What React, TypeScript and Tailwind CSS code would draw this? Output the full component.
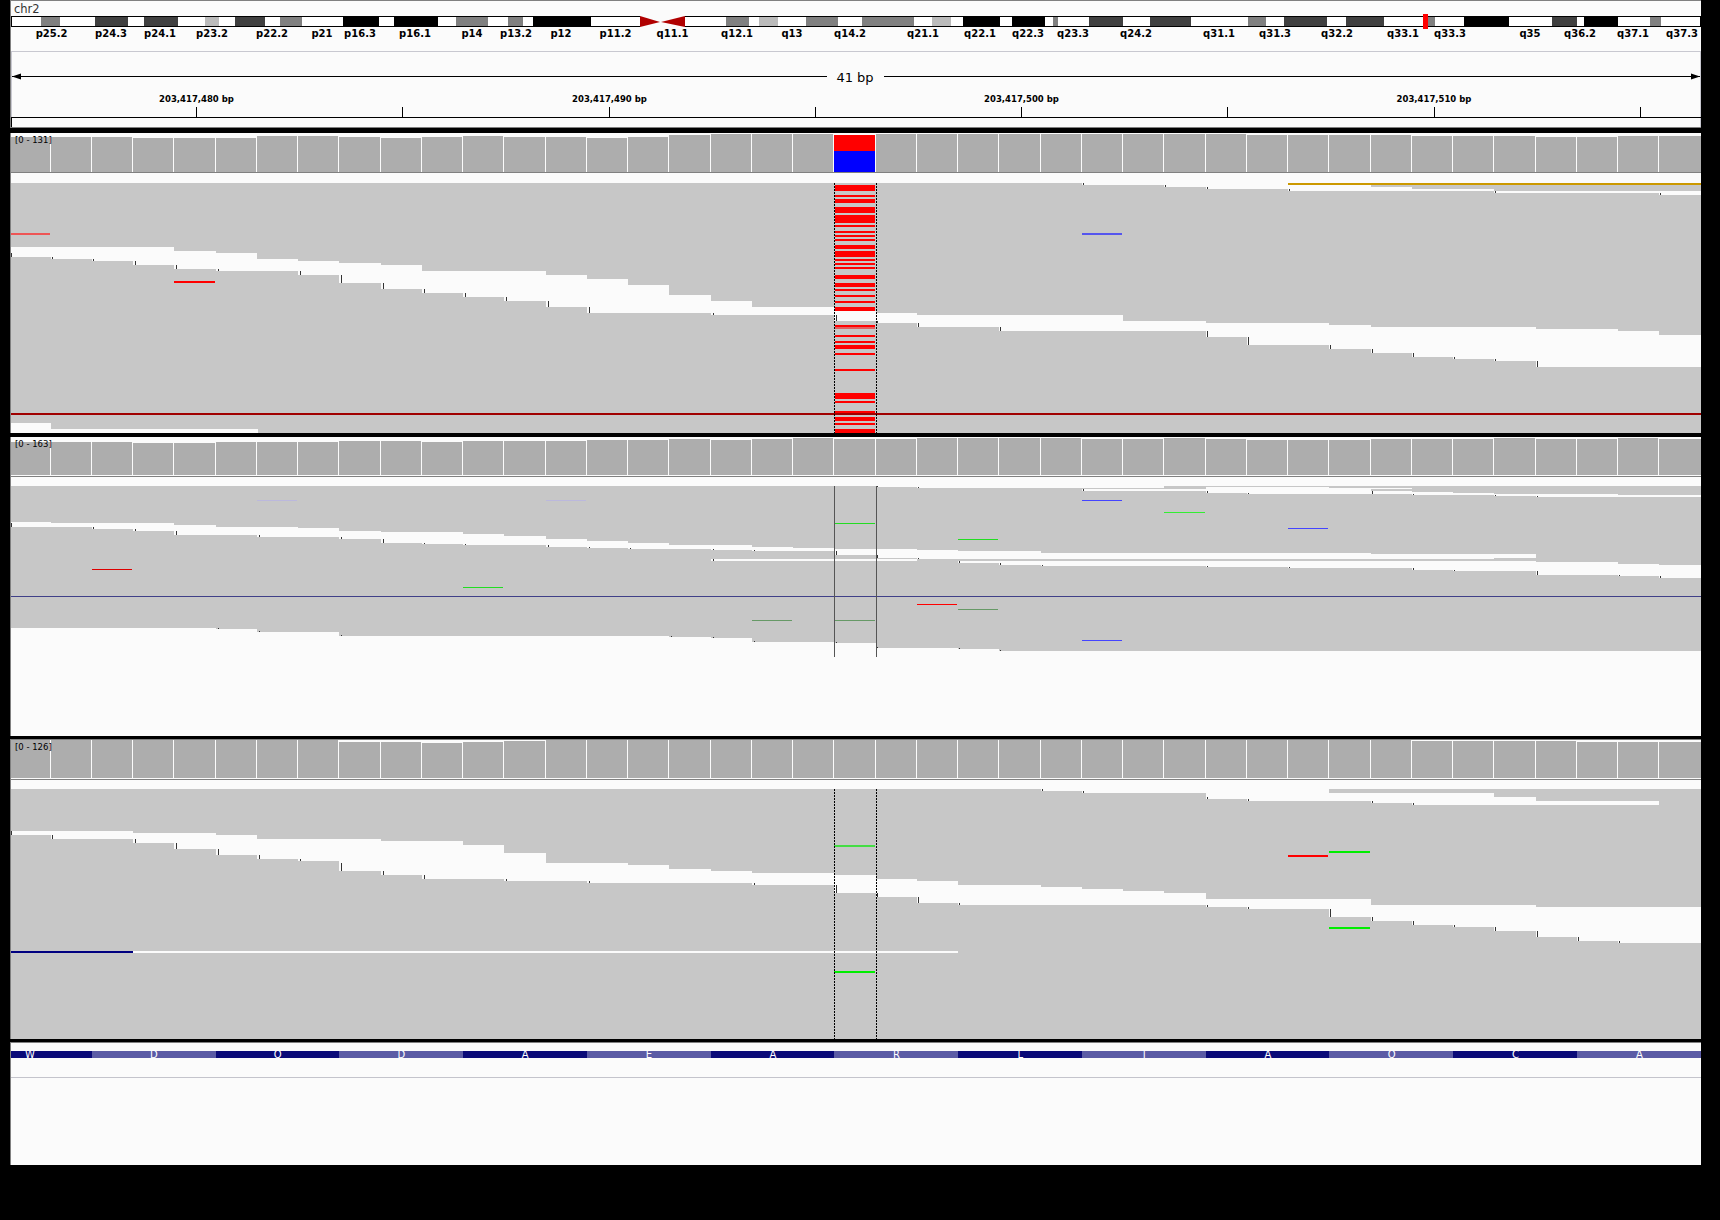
import type { ReactNode } from "react";

type Band = [number, number, number];

const sep = (i: number) => Math.round(8.25 + 41.25 * i);
const colX = (i: number) => (i === 0 ? 11 : sep(i) + 1);
const colEnd = (i: number) => (i === 40 ? 1701 : sep(i + 1));
const tickX = (i: number) => (i === 0 ? 11 : i >= 3 && i <= 20 ? colX(i) + 2 : colX(i) + 1);

const GAP = "#fbfbfb";
const READ = "#c7c7c7";
const BAR = "#adadad";

// zoom rows are 3x the page, so a z value is a third of a pixel
const toY = (base: number, z: number) => base + z / 3;
const seq = (start: number, rows: number[][]): Band[] =>
  rows.map((r, i) => [start + i, r[0], r[1]]);

function Rect({ x, y, w, h, c }: { x: number; y: number; w: number; h: number; c: string }) {
  return <rect x={x} y={y} width={w} height={h} fill={c} />;
}

function Stair({ bands, base, cap = 24 }: { bands: Band[]; base: number; cap?: number }) {
  let prev = -1;
  return (
    <>
      {bands.map(([col, z1, z2]) => {
        const from = prev < 0 ? Math.max(z1, z2 - 12) : Math.max(prev, z2 - cap, z1);
        const hasTick = z2 > prev;
        prev = z2;
        return (
          <g key={`${col}-${z1}`}>
            <Rect x={colX(col)} y={toY(base, z1)} w={colEnd(col) - colX(col) + 1} h={(z2 - z1) / 3} c={GAP} />
            {hasTick && <Rect x={tickX(col)} y={toY(base, from)} w={1} h={(z2 - from) / 3} c="#333333" />}
          </g>
        );
      })}
    </>
  );
}

function Mark({ col, y, c, h = 1 }: { col: number; y: number; c: string; h?: number }) {
  return <Rect x={colX(col)} y={y} w={colEnd(col) - colX(col)} h={h} c={c} />;
}

function Track({
  top,
  height,
  label,
  labelTop,
  barTop,
  barBottom,
  lineY,
  readTop,
  readBottom,
  offsets,
  children,
}: {
  top: number;
  height: number;
  label: string;
  labelTop: string;
  barTop: number;
  barBottom: number;
  lineY: number;
  readTop: number;
  readBottom: number;
  offsets: number[];
  children: ReactNode;
}) {
  return (
    <div className="relative w-[1691px] border-l border-[#808080] bg-[#fbfbfb]" style={{ height }}>
      <svg
        className="block h-full w-[1690px]"
        viewBox={`11 ${top} 1690 ${height}`}
        shapeRendering="crispEdges"
      >
        {offsets.map((o, i) => (
          <Rect
            key={i}
            x={colX(i)}
            y={barTop + o}
            w={colEnd(i) - colX(i)}
            h={barBottom - barTop - o}
            c={BAR}
          />
        ))}
        <Rect x={11} y={lineY} w={1690} h={1} c="#808080" />
        <Rect x={11} y={readTop} w={1690} h={readBottom - readTop} c={READ} />
        {children}
      </svg>
      <span className={`absolute left-[4px] text-[8.5px] leading-none text-black ${labelTop}`}>{label}</span>
    </div>
  );
}

const cyto: [number, number, string][] = [
  [41, 60, "#808080"], [95, 128, "#404040"], [144, 178, "#404040"], [205, 219, "#bbbbbb"],
  [235, 265, "#404040"], [280, 302, "#808080"], [343, 379, "#000000"], [394, 438, "#000000"],
  [456, 488, "#808080"], [508, 523, "#808080"], [533, 591, "#000000"], [726, 749, "#808080"],
  [759, 778, "#bbbbbb"], [806, 838, "#808080"], [862, 914, "#808080"], [932, 951, "#bbbbbb"],
  [963, 1000, "#000000"], [1012, 1045, "#000000"], [1053, 1058, "#808080"], [1089, 1123, "#404040"],
  [1150, 1191, "#404040"], [1248, 1266, "#808080"], [1284, 1327, "#404040"], [1346, 1384, "#404040"],
  [1428, 1435, "#808080"], [1464, 1509, "#000000"], [1552, 1577, "#404040"], [1584, 1618, "#000000"],
  [1650, 1661, "#808080"],
];

const cytoLabels: [string, number][] = [
  ["p25.2", 51.6], ["p24.3", 111], ["p24.1", 160], ["p23.2", 212], ["p22.2", 272], ["p21", 322],
  ["p16.3", 360], ["p16.1", 415], ["p14", 472], ["p13.2", 516], ["p12", 561], ["p11.2", 615.5],
  ["q11.1", 672.5], ["q12.1", 737], ["q13", 792], ["q14.2", 850], ["q21.1", 923], ["q22.1", 980],
  ["q22.3", 1028], ["q23.3", 1073], ["q24.2", 1136], ["q31.1", 1219], ["q31.3", 1275], ["q32.2", 1337],
  ["q33.1", 1403], ["q33.3", 1450], ["q35", 1530], ["q36.2", 1580], ["q37.1", 1633], ["q37.3", 1682],
];

const rulerTicks = [196, 402, 609, 815, 1021, 1227, 1434, 1640];
const rulerLabels: [string, number][] = [
  ["203,417,480 bp", 196.5],
  ["203,417,490 bp", 609.5],
  ["203,417,500 bp", 1021.5],
  ["203,417,510 bp", 1434],
];

function Header() {
  return (
    <div className="h-[128px] w-[1691px] border-l border-[#808080] bg-[#fbfbfb]">
      <svg className="block h-full w-[1690px]" viewBox="11 0 1690 128">
        <g shapeRendering="crispEdges">
          <Rect x={11} y={0} w={1690} h={1} c="#808080" />
          <Rect x={11} y={16} w={1690} h={11} c="#ffffff" />
          {cyto.map(([a, b, c]) => (
            <Rect key={a} x={a} y={16} w={b - a} h={11} c={c} />
          ))}
          <Rect x={640} y={16} w={45} h={11} c={GAP} />
          <Rect x={11} y={16} w={629} h={1} c="#000000" />
          <Rect x={11} y={26} w={629} h={1} c="#000000" />
          <Rect x={685} y={16} w={1016} h={1} c="#000000" />
          <Rect x={685} y={26} w={1016} h={1} c="#000000" />
          <Rect x={11} y={16} w={1} h={11} c="#000000" />
          <Rect x={1700} y={16} w={1} h={11} c="#000000" />
          <Rect x={1423} y={14} w={5} h={15} c="#ff0000" />
          <Rect x={11} y={51} w={1690} h={1} c="#c8c8d0" />
          <Rect x={11} y={51} w={1} h={66} c="#c8c8d0" />
          <Rect x={1700} y={51} w={1} h={76} c="#c8c8d0" />
          <Rect x={12} y={76} w={815} h={1} c="#000000" />
          <Rect x={884} y={76} w={816} h={1} c="#000000" />
          {rulerTicks.map((x) => (
            <Rect key={x} x={x} y={107} w={1} h={10} c="#000000" />
          ))}
          <Rect x={11} y={117} w={1690} h={1} c="#000000" />
          <Rect x={11} y={117} w={1} h={10} c="#000000" />
          <Rect x={11} y={127} w={1690} h={1} c="#808080" />
        </g>
        <polygon points="640,16 640,27 660,22" fill="#b00000" />
        <polygon points="685,16 685,27 661,22" fill="#b00000" />
        <polygon points="12,76.5 21,73.5 21,79.5" fill="#000000" />
        <polygon points="1700,76.5 1691,73.5 1691,79.5" fill="#000000" />
        <text x={14} y={13} fontSize={11.5} fill="#333333">chr2</text>
        {cytoLabels.map(([t, x]) => (
          <text key={t} x={x} y={37} fontSize={10} fontWeight={700} textAnchor="middle" fill="#000000">
            {t}
          </text>
        ))}
        <text x={855} y={82} fontSize={13} textAnchor="middle" fill="#000000">41 bp</text>
        {rulerLabels.map(([t, x]) => (
          <text key={t} x={x} y={102} fontSize={8.5} fontWeight={700} textAnchor="middle" fill="#000000">
            {t}
          </text>
        ))}
      </svg>
    </div>
  );
}

const rows1: [number, number, string?][] = [
  [45, 63], [75, 81], [87, 99], [111, 129], [135, 159], [165, 171], [183, 189], [195, 201], [207, 213],
  [225, 237], [243, 261], [267, 273], [279, 285], [291, 297], [315, 327], [339, 351], [357, 363],
  [375, 381], [393, 399], [411, 423], [465, 471], [471, 477, "#e06060"], [495, 501], [513, 519],
  [525, 537], [549, 555], [597, 603], [669, 687], [693, 699], [723, 735], [741, 753], [759, 765], [777, 789],
];

function Dotted({ top, bottom }: { top: number; bottom: number }) {
  return (
    <>
      <line x1={834.5} x2={834.5} y1={top} y2={bottom} stroke="#000000" strokeDasharray="2 1" />
      <line x1={876.5} x2={876.5} y1={top} y2={bottom} stroke="#000000" strokeDasharray="2 1" />
    </>
  );
}

function Reads1() {
  const base = 170;
  const mid = seq(0, [
    [231, 261], [231, 267], [231, 273], [231, 285], [243, 297], [249, 303], [267, 303], [273, 315],
    [279, 339], [285, 357], [303, 369], [303, 381], [303, 393], [315, 411], [327, 429], [345, 429],
    [375, 429], [393, 435], [411, 435], [411, 435], [423, 453], [429, 459], [435, 471], [435, 471],
    [435, 483], [435, 483], [435, 483], [453, 483], [453, 483], [459, 501], [459, 525], [459, 525],
    [465, 537], [471, 549], [471, 561], [471, 567], [471, 573], [477, 591], [477, 591], [483, 591], [495, 591],
  ]);
  const top: Band[] = [
    [26, 39, 45], [27, 39, 45], [28, 39, 51], [29, 39, 57], [30, 39, 57], [31, 39, 63], [32, 39, 63],
    [33, 51, 63], [34, 57, 63], [35, 57, 63], [36, 63, 69], [37, 63, 69], [38, 63, 69], [39, 63, 69], [40, 63, 75],
  ];
  return (
    <>
      <Stair bands={mid} base={base} />
      <Stair bands={top} base={base} cap={6} />
      <Rect x={1288} y={183} w={413} h={2} c="#cc9900" />
      <Rect x={11} y={423} w={40} h={10} c={GAP} />
      <Rect x={51} y={429} w={207} h={4} c={GAP} />
      <Mark col={0} y={233} c="#ee5555" h={2} />
      <Mark col={4} y={281} c="#ff0000" h={2} />
      <Mark col={26} y={233} c="#5555ee" h={2} />
      {rows1.map(([a, b, c]) => (
        <Rect key={a} x={835} y={toY(base, a)} w={40} h={(b - a) / 3} c={c ?? "#ff0000"} />
      ))}
      <Rect x={11} y={413} w={1690} h={2} c="#a00000" />
      <Dotted top={183} bottom={433} />
    </>
  );
}

function Reads2() {
  const base = 430;
  const mid = seq(0, [
    [276, 291], [279, 291], [279, 297], [279, 303], [285, 315], [291, 315], [291, 321], [294, 321],
    [303, 327], [306, 339], [306, 342], [312, 345], [318, 345], [327, 351], [333, 354], [339, 357],
    [345, 357], [345, 360], [351, 363], [354, 363], [357, 375], [357, 384], [360, 387], [363, 387],
    [363, 387], [369, 387], [369, 387], [369, 387], [369, 387], [369, 387], [369, 387], [369, 387],
    [369, 387], [372, 387], [372, 387], [372, 387], [372, 384],
  ]);
  const lower = [
    ...seq(17, [[387, 393], [387, 393], [387, 393], [387, 393], [387, 393]]),
    ...seq(23, [
      [393, 399], [393, 405], [393, 408], [393, 408], [393, 408], [393, 408], [393, 411], [393, 411],
      [393, 414], [393, 414], [393, 414], [393, 420], [393, 423], [393, 423], [396, 435], [396, 435],
      [402, 438], [405, 444],
    ]),
  ];
  const top = seq(21, [[168, 171], [168, 174], [168, 174], [168, 174], [168, 174], [168, 174], [168, 174]]);
  const upper: Band[] = [
    [26, 177, 183], [27, 177, 183], [28, 177, 183], [29, 171, 189], [30, 171, 192], [31, 171, 192], [32, 174, 192],
  ];
  const upper2: Band[] = [
    [33, 183, 192], [34, 186, 195], [35, 189, 195], [36, 192, 198], [37, 192, 201], [38, 192, 201], [39, 195, 201], [40, 195, 201],
  ];
  const bottoms = [
    594, 594, 594, 594, 594, 597, 606, 606, 618, 618, 618, 618, 618, 618, 618, 618, 621, 624, 636, 636, 639,
    654, 654, 657, 663, 663, 663, 663, 663, 663, 663, 663, 663, 663, 663, 663, 663, 663, 663, 663, 663,
  ];
  return (
    <>
      <Stair bands={mid} base={base} />
      <Stair bands={lower} base={base} />
      <Stair bands={top} base={base} cap={3} />
      <Stair bands={upper} base={base} cap={6} />
      <Stair bands={upper2} base={base} cap={6} />
      <Rect x={colX(28)} y={486} w={colX(29) - colX(28)} h={1} c={READ} />
      <Rect x={colX(33)} y={488} w={colX(34) - colX(33)} h={1} c={GAP} />
      {bottoms.map((z, i) => (
        <g key={i}>
          <Rect x={colX(i)} y={toY(base, z)} w={colEnd(i) - colX(i) + 1} h={736 - toY(base, z)} c={GAP} />
          {i > 0 && z > bottoms[i - 1] && <Rect x={tickX(i)} y={toY(base, z) - 1} w={1} h={1} c="#333333" />}
        </g>
      ))}
      <Mark col={6} y={500} c="#bbb8dd" />
      <Mark col={13} y={500} c="#bbb8dd" />
      <Mark col={26} y={500} c="#4444ff" />
      <Mark col={28} y={512} c="#33ee33" />
      <Mark col={20} y={523} c="#22dd22" />
      <Mark col={31} y={528} c="#4444ff" />
      <Mark col={23} y={539} c="#22dd22" />
      <Mark col={2} y={569} c="#dd0000" />
      <Mark col={11} y={587} c="#22dd22" />
      <Rect x={11} y={596} w={1690} h={1} c="#404088" />
      <Mark col={22} y={604} c="#ff0000" />
      <Mark col={23} y={609} c="#669966" />
      <Mark col={18} y={620} c="#669966" />
      <Mark col={20} y={620} c="#669966" />
      <Mark col={26} y={640} c="#4444ff" />
      <Rect x={834} y={486} w={1} h={171} c="#555555" />
      <Rect x={876} y={486} w={1} h={171} c="#555555" />
    </>
  );
}

function Reads3() {
  const base = 730;
  const mid = seq(0, [
    [303, 315], [303, 327], [303, 327], [309, 339], [309, 357], [315, 375], [327, 387], [327, 393],
    [327, 423], [333, 435], [333, 447], [345, 447], [369, 453], [399, 453], [399, 459], [405, 459],
    [417, 459], [423, 459], [429, 465], [429, 465], [435, 489], [447, 501], [453, 519], [465, 525],
    [465, 525], [471, 525], [477, 525], [483, 525], [489, 525], [507, 531], [507, 537], [507, 537],
    [507, 561], [525, 573], [525, 585], [525, 591], [525, 603], [531, 621], [531, 633], [531, 639], [531, 639],
  ]);
  const top = seq(25, [
    [177, 183], [177, 189], [177, 189], [177, 189], [177, 207], [177, 213], [177, 213], [189, 213],
    [189, 219], [189, 225], [189, 225], [201, 225], [213, 225], [213, 225], [213, 225],
  ]);
  return (
    <>
      <Rect x={11} y={739} w={1690} h={1} c="#808080" />
      <Stair bands={mid} base={base} />
      <Stair bands={top} base={base} cap={6} />
      <Rect x={11} y={951} w={colX(3) - 11} h={2} c="#000080" />
      <Rect x={colX(3)} y={951} w={colX(23) - colX(3)} h={2} c={GAP} />
      <Mark col={20} y={845} c="#44dd44" h={2} />
      <Mark col={20} y={971} c="#00ee00" h={2} />
      <Mark col={32} y={851} c="#00ee00" h={2} />
      <Mark col={31} y={855} c="#ff0000" h={2} />
      <Mark col={32} y={927} c="#00ee00" h={2} />
      <Dotted top={789} bottom={1039} />
    </>
  );
}

const aminos = ["W", "D", "Q", "D", "A", "E", "A", "R", "L", "I", "A", "Q", "C", "A"];

function Protein() {
  return (
    <div className="h-[123px] w-[1691px] border-l border-t border-[#808080] bg-[#fbfbfb]">
      <svg className="block h-[122px] w-[1690px]" viewBox="11 1043 1690 122">
        <g shapeRendering="crispEdges">
          {aminos.map((_, i) => {
            const x = i === 0 ? 11 : sep(3 * i - 1) + 1;
            const end = i === 13 ? 1701 : sep(3 * i + 2) + 1;
            return <Rect key={i} x={x} y={1051} w={end - x} h={7} c={i % 2 ? "#5b5ba5" : "#0a0a78"} />;
          })}
          <Rect x={11} y={1077} w={1690} h={1} c="#c4c4cc" />
        </g>
        {aminos.map((a, i) => (
          <text key={i} x={30 + 123.8 * i} y={1058} fontSize={10} textAnchor="middle" fill="#ffffff">
            {a}
          </text>
        ))}
      </svg>
    </div>
  );
}

export default function App() {
  return (
    <div className="flex h-[1220px] w-[1720px] flex-col overflow-hidden bg-black pl-[10px] font-['DejaVu_Sans',sans-serif]">
      <Header />
      <div className="mt-[5px]">
        <Track
          top={133}
          height={300}
          label="[0 - 131]"
          labelTop="top-[3px]"
          barTop={134}
          barBottom={172}
          lineY={172}
          readTop={183}
          readBottom={433}
          offsets={[
            3, 3, 3, 4, 4, 4, 2, 2, 3, 4, 3, 2, 3, 3, 4, 3, 1, 0, 0, 0, 1, 0, 0, 0, 0, 0, 0, 0, 0, 0, 1, 1, 1, 1, 2, 2, 2,
            3, 3, 2, 2,
          ]}
        >
          <Rect x={834} y={135} w={41} h={16} c="#ff0000" />
          <Rect x={834} y={151} w={41} h={21} c="#0000ff" />
          <Reads1 />
        </Track>
      </div>
      <div className="mt-[4px]">
        <Track
          top={437}
          height={299}
          label="[0 - 163]"
          labelTop="top-[3px]"
          barTop={438}
          barBottom={475}
          lineY={476}
          readTop={486}
          readBottom={664}
          offsets={[
            4, 4, 4, 5, 5, 4, 4, 4, 3, 3, 4, 3, 3, 3, 2, 2, 1, 2, 1, 0, 1, 1, 0, 0, 0, 0, 1, 1, 0, 1, 2, 2, 2, 1, 1, 1, 0,
            1, 1, 0, 1,
          ]}
        >
          <Reads2 />
        </Track>
      </div>
      <div className="mt-[3px]">
        <Track
          top={739}
          height={300}
          label="[0 - 126]"
          labelTop="top-[4px]"
          barTop={740}
          barBottom={778}
          lineY={779}
          readTop={789}
          readBottom={1039}
          offsets={[
            0, 0, 0, 0, 0, 0, 0, 0, 2, 2, 3, 2, 1, 0, 0, 0, 0, 0, 0, 0, 0, 0, 0, 0, 0, 0, 0, 0, 0, 0, 0, 0, 0, 0, 1, 1, 1,
            1, 2, 2, 2,
          ]}
        >
          <Reads3 />
        </Track>
      </div>
      <div className="mt-[3px]">
        <Protein />
      </div>
    </div>
  );
}
